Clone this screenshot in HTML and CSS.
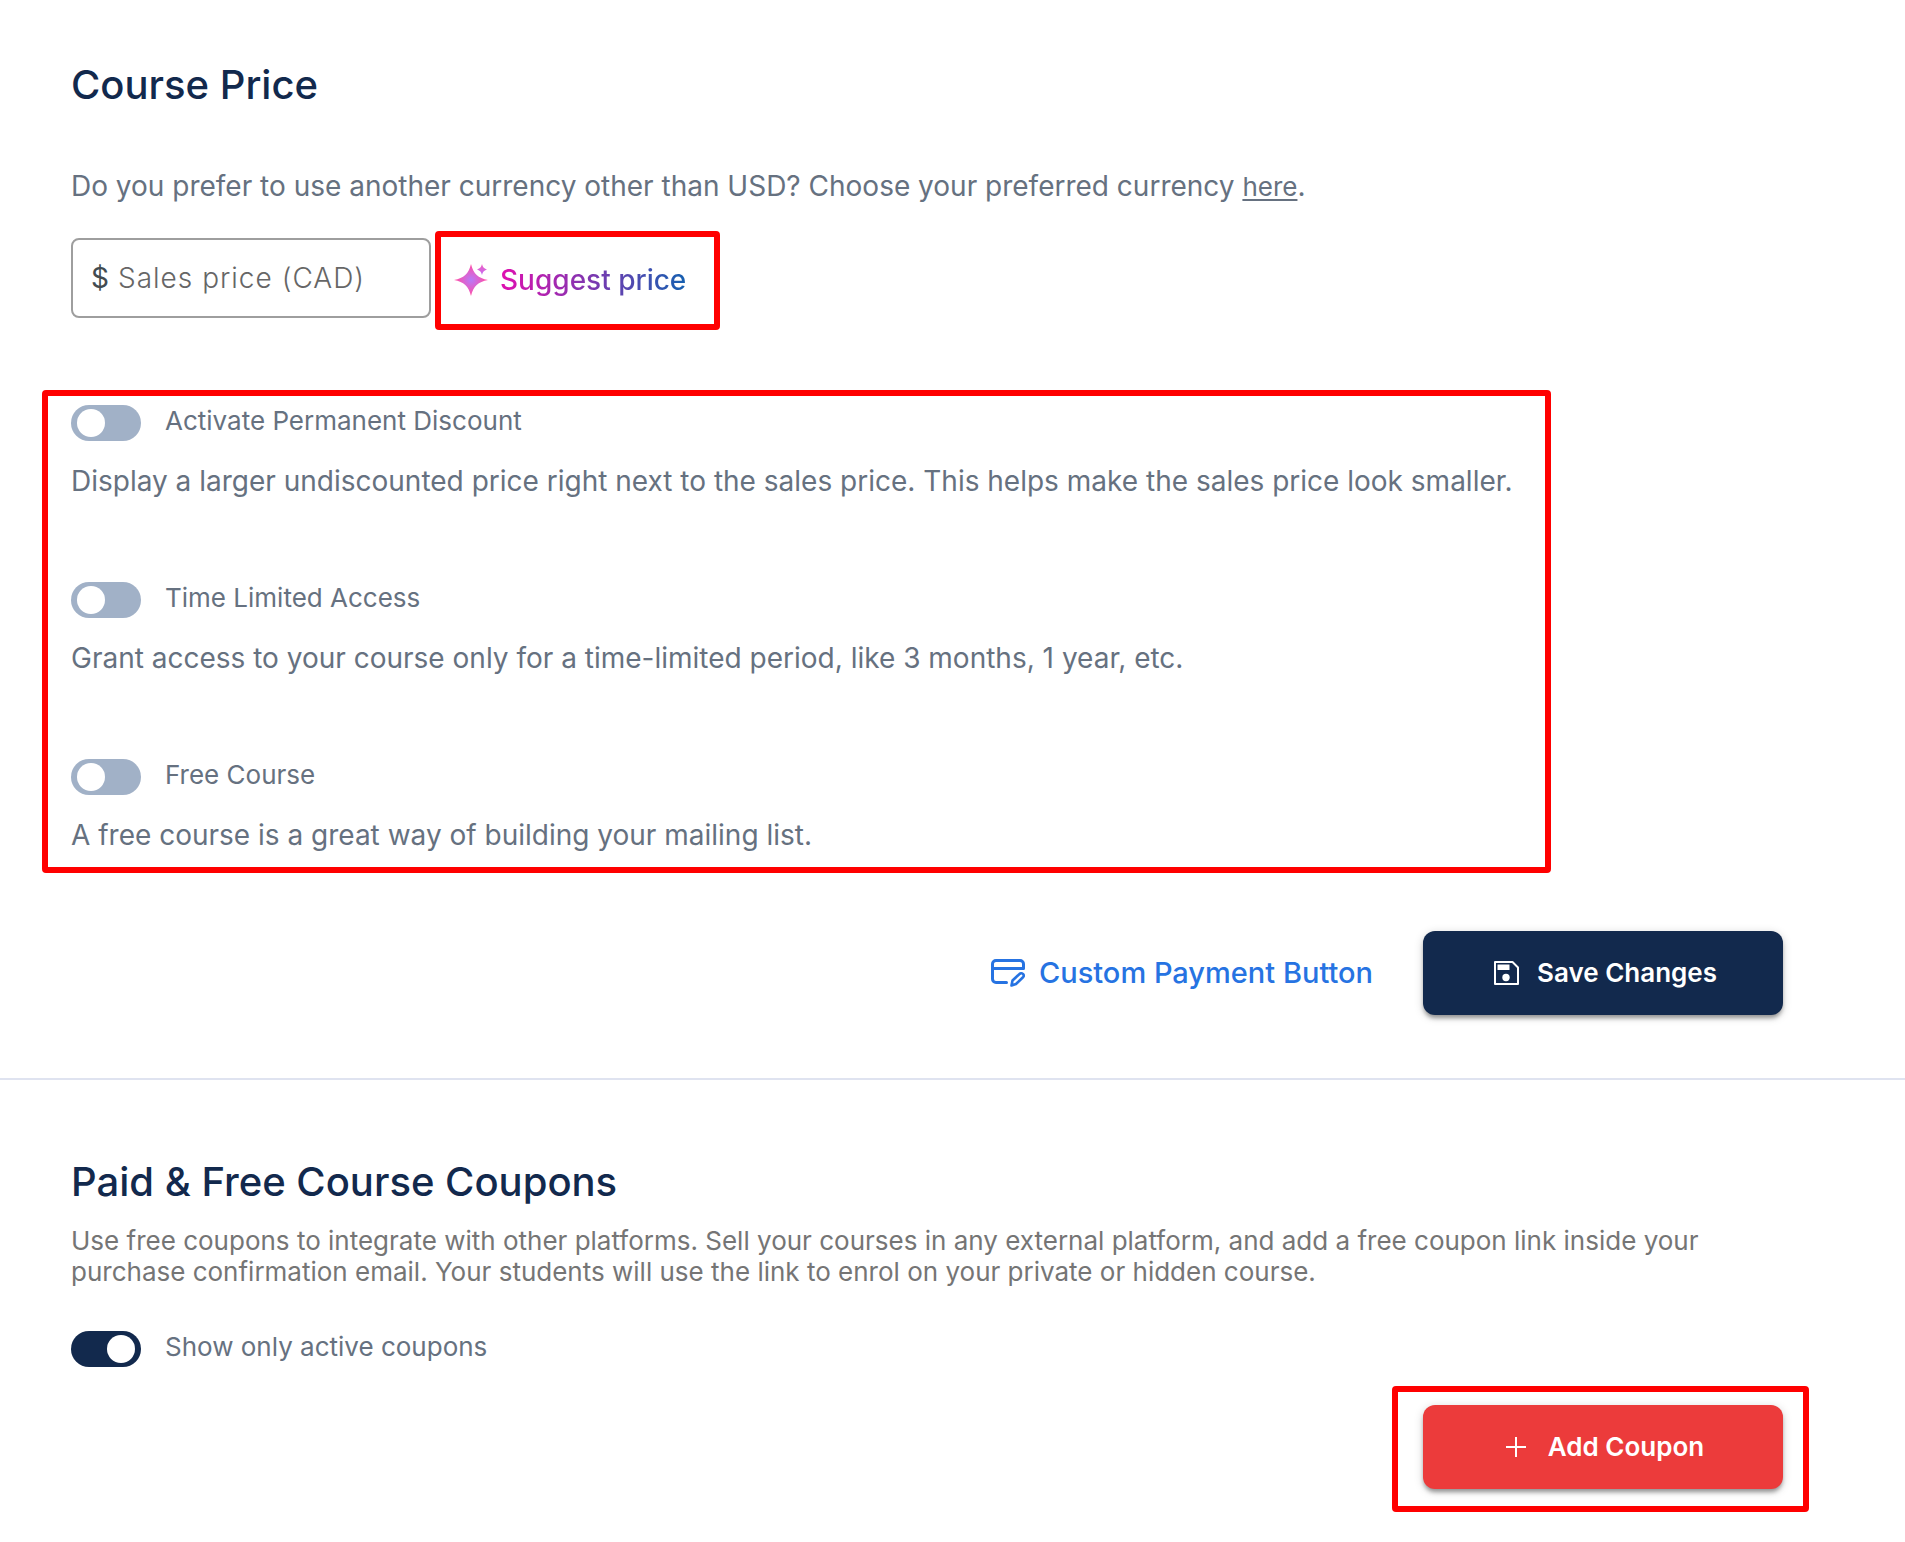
FILE: index.html
```html
<!DOCTYPE html>
<html lang="en">
<head>
<meta charset="utf-8">
<meta name="viewport" content="width=device-width, initial-scale=1">
<title>Course Price</title>
<link rel="stylesheet" href="styles.css">
</head>
<body>
<main>
  <section class="panel price">
    <h1 class="title">Course Price</h1>
    <p class="lead">Do you prefer to use another currency other than USD? Choose your preferred currency <a href="#currency">here</a>.</p>
    <div class="price-row">
      <label class="field">
        <span class="field-sign">$</span>
        <input class="field-input" type="text" placeholder="Sales price (CAD)" aria-label="Sales price (CAD)">
      </label>
      <button class="suggest marked" type="button">
        <svg class="sparkle" viewBox="0 0 36 32" aria-hidden="true">
          <defs>
            <radialGradient id="spark" gradientUnits="userSpaceOnUse" cx="17" cy="16" r="15">
              <stop offset="0" stop-color="#b87af8"/>
              <stop offset="1" stop-color="#ff4fa8"/>
            </radialGradient>
            <linearGradient id="spark-small" x1="0" y1="0" x2="0" y2="1">
              <stop offset="0" stop-color="#f05cc0"/>
              <stop offset="1" stop-color="#c46cf4"/>
            </linearGradient>
          </defs>
          <path fill="url(#spark)" d="M17 0C19.500 10 24 14 34 16C24 18 19.500 22 17 32C14.500 22 10 18 0 16C10 14 14.500 10 17 0Z"/>
          <path fill="url(#spark-small)" d="M28 0C28.800 3.200 29.800 4.200 33 5.500C29.800 6.800 28.800 7.800 28 11C27.200 7.800 26.200 6.800 23 5.500C26.200 4.200 27.200 3.200 28 0Z"/>
        </svg>
        <span class="suggest-text">Suggest price</span>
      </button>
    </div>
    <div class="options marked">
      <div class="option">
        <label class="switch"><input type="checkbox"><span>Activate Permanent Discount</span></label>
        <p class="hint">Display a larger undiscounted price right next to the sales price. This helps make the sales price look smaller.</p>
      </div>
      <div class="option">
        <label class="switch"><input type="checkbox"><span>Time Limited Access</span></label>
        <p class="hint">Grant access to your course only for a time-limited period, like 3 months, 1 year, etc.</p>
      </div>
      <div class="option">
        <label class="switch"><input type="checkbox"><span>Free Course</span></label>
        <p class="hint">A free course is a great way of building your mailing list.</p>
      </div>
    </div>
    <div class="actions">
      <button class="link-button" type="button">
        <svg class="card-icon" viewBox="0 0 34 28" fill="none" stroke="currentColor" stroke-width="3" stroke-linecap="round" stroke-linejoin="round" aria-hidden="true">
          <path d="M15.500 23.500H5a3.500 3.500 0 0 1-3.500-3.500V5A3.500 3.500 0 0 1 5 1.500H29A3.500 3.500 0 0 1 32.500 5V9.500H1.500"/>
          <path d="M20.500 26.500L21.500 21.500L28.500 15A2.300 2.300 0 0 1 32 18.300L25 25Z" stroke-width="2.600"/>
        </svg>
        <span>Custom Payment Button</span>
      </button>
      <button class="button navy" type="button">
        <svg class="save-icon" viewBox="0 0 26 26" aria-hidden="true">
          <path d="M2 2H19.500L25 7.500V24H2Z" fill="none" stroke="#fff" stroke-width="2" stroke-linejoin="round"/>
          <path d="M4.500 4.500H16.500V10H4.500Z" fill="#fff"/>
          <circle cx="13" cy="17.500" r="3.700" fill="#fff"/>
        </svg>
        <span>Save Changes</span>
      </button>
    </div>
  </section>
  <section class="panel coupons">
    <h2 class="title">Paid &amp; Free Course Coupons</h2>
    <p class="note">Use free coupons to integrate with other platforms. Sell your courses in any external platform, and add a free coupon link inside your purchase confirmation email. Your students will use the link to enrol on your private or hidden course.</p>
    <label class="switch"><input type="checkbox" checked><span>Show only active coupons</span></label>
    <div class="add-row">
      <div class="marked add-mark">
        <button class="button red" type="button">
          <svg class="plus-icon" viewBox="0 0 20 20" stroke="#fff" stroke-width="2" aria-hidden="true"><path d="M10 0V20M0 10H20"/></svg>
          <span>Add Coupon</span>
        </button>
      </div>
    </div>
  </section>
</main>
</body>
</html>
```
FILE: styles.css
```css
* { box-sizing: border-box; }
body {
  margin: 0;
  background: #fff;
  color: #667180;
  font-family: Inter, "Liberation Sans", sans-serif;
  font-size: 28px;
  line-height: 34px;
}
h1, h2, p { margin: 0; }
button, input { font: inherit; color: inherit; }
button { cursor: pointer; }

.panel { padding: 61px 122px 63px 71px; }
.price { border-bottom: 2px solid #dfe3f0; }
.coupons { padding-top: 78px; padding-bottom: 53px; }

.title {
  color: #12294d;
  font-size: 40px;
  font-weight: 500;
  line-height: 48px;
}
.lead { margin-top: 60px; }
.lead a {
  color: inherit;
  font-size: 26px;
  text-decoration-thickness: 2px;
  text-underline-offset: 3px;
}

.price-row { display: flex; align-items: center; gap: 10px; margin-top: 34px; }
.field {
  display: flex;
  align-items: center;
  gap: 9px;
  width: 360px;
  height: 80px;
  padding: 0 18px;
  border: 2px solid #9e9e9e;
  border-radius: 8px;
}
.field-sign { color: #424b50; }
.field-input {
  flex: 1;
  min-width: 0;
  padding: 0;
  border: 0;
  outline: 0;
  background: none;
  font-weight: 300;
  letter-spacing: 1px;
}
.field-input::placeholder { color: #666; opacity: 1; }

.marked { position: relative; }
.marked::after {
  content: "";
  position: absolute;
  border: 6px solid #f00;
  border-radius: 4px;
  pointer-events: none;
}

.suggest {
  display: flex;
  align-items: center;
  gap: 10px;
  height: 80px;
  padding: 4px 28px 0 13px;
  border: 0;
  background: none;
  font-weight: 500;
}
.suggest::after { inset: -7px -6px -12px; }
.sparkle { width: 36px; height: 32px; }
.suggest-text {
  background: linear-gradient(90deg, #e010b0, #1560b0);
  -webkit-background-clip: text;
  background-clip: text;
  color: transparent;
}

.options { display: grid; gap: 84px; width: fit-content; margin-top: 87px; }
.options::after { inset: -15px -38px -21px -29px; }
.switch {
  display: flex;
  align-items: flex-start;
  gap: 24px;
  width: fit-content;
  font-size: 26px;
  line-height: 32px;
}
.switch input {
  appearance: none;
  display: flex;
  width: 70px;
  height: 36px;
  margin: 0;
  padding: 4px 6px;
  border-radius: 18px;
  background: #a1b1c7;
}
.switch input::before {
  content: "";
  width: 28px;
  height: 28px;
  border-radius: 50%;
  background: #fff;
}
.switch input:checked { justify-content: flex-end; background: #12294d; }
.hint { margin-top: 23px; }

.actions { display: flex; justify-content: flex-end; align-items: center; gap: 50px; margin-top: 79px; }
.link-button {
  display: flex;
  align-items: center;
  gap: 14px;
  padding: 0;
  border: 0;
  background: none;
  color: #2673e2;
  font-size: 29px;
  font-weight: 500;
}
.card-icon { width: 34px; height: 28px; }
.button {
  display: flex;
  align-items: center;
  justify-content: center;
  gap: 18px;
  width: 360px;
  height: 84px;
  padding: 0 0 0 4px;
  border: 0;
  border-radius: 12px;
  box-shadow: 0 4px 4px -1px rgb(0 0 0 / 35%), 0 2px 10px rgb(0 0 0 / 18%);
  color: #fff;
  font-size: 26px;
  font-weight: 600;
}
.navy { background: #12294d; }
.red { gap: 22px; background: #ec3b3b; }
.save-icon { width: 26px; height: 26px; }
.plus-icon { width: 20px; height: 20px; }

.note { margin: 19px 0 44px; color: #757575; font-size: 26px; line-height: 31px; }
.add-row { display: flex; justify-content: flex-end; margin-top: 38px; }
.add-mark::after { inset: -19px -26px -23px -31px; }
```
